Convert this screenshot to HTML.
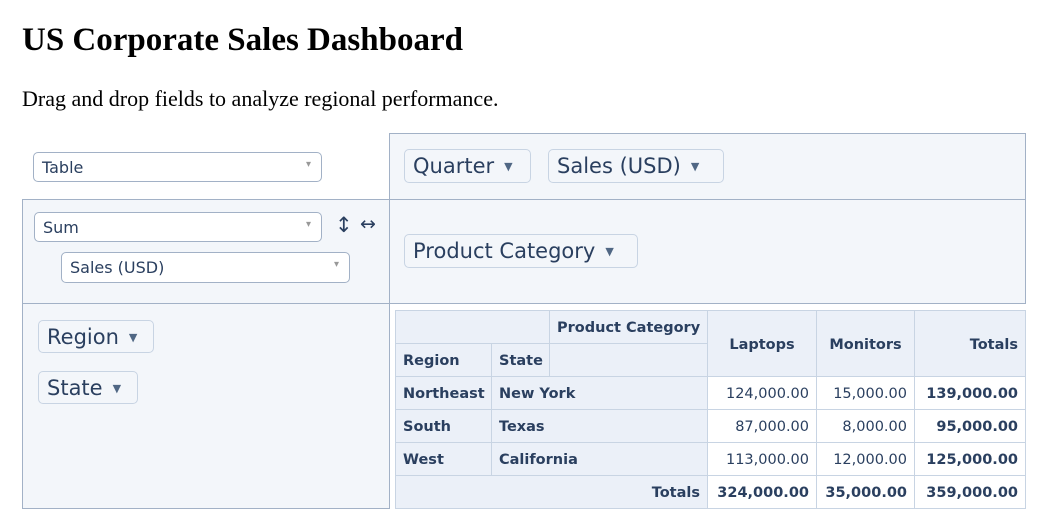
<!DOCTYPE html>
<html><head><meta charset="utf-8"><style>
body{margin:0;width:1039px;height:523px;background:#fff;position:relative;overflow:hidden;font-family:"DejaVu Sans",Verdana,sans-serif;color:#2a3f5f}
.a{position:absolute;box-sizing:border-box}
h1{position:absolute;left:22px;top:22px;margin:0;font:bold 33px "Liberation Serif",serif;color:#000;white-space:nowrap}
p{position:absolute;left:22px;top:86px;margin:0;font:22px "Liberation Serif",serif;color:#000;white-space:nowrap}
.cell{background:#f3f6fa;border:1px solid #a2b1c6}
.sel{background:#fff;border:1px solid #a2b1c6;border-radius:5px;font-size:16px;padding:5px 0 0 8px;color:#2a3f5f}
.sel:after{content:"▾";position:absolute;right:10px;top:6px;font-size:10px;color:#999}
.pill{background:#f3f6fa;border:1px solid #c8d4e3;border-radius:5px;font-size:21px;padding:4px 0 0 8px;white-space:nowrap;color:#2a3f5f}
.pill span{font-size:11px;margin-left:10px;vertical-align:3px;color:#506784}
table{position:absolute;left:395px;top:310px;border-collapse:collapse;font-size:14.5px;table-layout:fixed;width:630px;white-space:nowrap}
td,th{border:1px solid #c8d4e3;padding:2px 7px 0;height:33px;box-sizing:border-box;overflow:visible}
th{background:#ebf0f8;font-weight:bold;text-align:left}
td{text-align:right;background:#fff}
.b{font-weight:bold}
</style></head><body>
<h1>US Corporate Sales Dashboard</h1>
<p>Drag and drop fields to analyze regional performance.</p>

<div class="a cell" style="left:389px;top:133px;width:637px;height:67px"></div>
<div class="a cell" style="left:22px;top:199px;width:1004px;height:105px"></div>
<div class="a" style="left:389px;top:199px;width:1px;height:105px;background:#a2b1c6"></div>
<div class="a cell" style="left:22px;top:303px;width:368px;height:206px"></div>

<div class="a sel" style="left:33px;top:152px;width:289px;height:30px">Table</div>
<div class="a sel" style="left:34px;top:212px;width:288px;height:30px">Sum</div>
<div class="a sel" style="left:61px;top:252px;width:289px;height:31px">Sales (USD)</div>
<div class="a" style="left:335px;top:213px;font-size:21px;color:#2a3f5f">↕</div>
<div class="a" style="left:360px;top:213px;font-size:19px;color:#2a3f5f">↔</div>

<div class="a pill" style="left:404px;top:149px;width:127px;height:34px">Quarter<span>▼</span></div>
<div class="a pill" style="left:548px;top:149px;width:176px;height:34px">Sales (USD)<span>▼</span></div>
<div class="a pill" style="left:404px;top:234px;width:234px;height:34px">Product Category<span>▼</span></div>
<div class="a pill" style="left:38px;top:320px;width:116px;height:33px">Region<span>▼</span></div>
<div class="a pill" style="left:38px;top:371px;width:100px;height:33px">State<span>▼</span></div>

<table>
<colgroup><col style="width:96px"><col style="width:58px"><col style="width:158px"><col style="width:109px"><col style="width:98px"><col style="width:111px"></colgroup>
<tr><th colspan="2"></th><th>Product Category</th><th rowspan="2" style="text-align:center">Laptops</th><th rowspan="2" style="text-align:center">Monitors</th><th rowspan="2" style="text-align:right">Totals</th></tr>
<tr><th>Region</th><th>State</th><th></th></tr>
<tr><th>Northeast</th><th colspan="2">New York</th><td>124,000.00</td><td>15,000.00</td><td class="b">139,000.00</td></tr>
<tr><th>South</th><th colspan="2">Texas</th><td>87,000.00</td><td>8,000.00</td><td class="b">95,000.00</td></tr>
<tr><th>West</th><th colspan="2">California</th><td>113,000.00</td><td>12,000.00</td><td class="b">125,000.00</td></tr>
<tr><th colspan="3" style="text-align:right">Totals</th><td class="b">324,000.00</td><td class="b">35,000.00</td><td class="b">359,000.00</td></tr>
</table>
</body></html>
